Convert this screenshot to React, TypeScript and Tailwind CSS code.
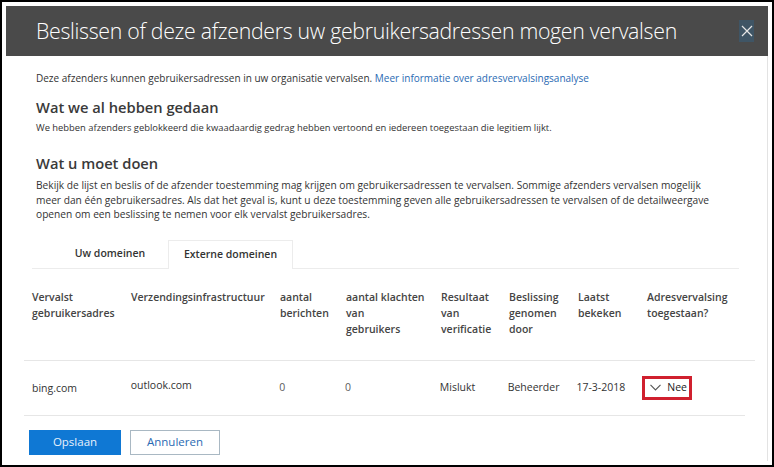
const FONT = { fontFamily: '"Segoe UI", "Open Sans", "Noto Sans", sans-serif' };

const columns = [
  { w: 'w-[99px]', lines: ['Vervalst', 'gebruikersadres'] },
  { w: 'w-[149px]', lines: ['Verzendingsinfrastructuur'] },
  { w: 'w-[66px]', lines: ['aantal', 'berichten'] },
  { w: 'w-[95px]', lines: ['aantal klachten', 'van', 'gebruikers'] },
  { w: 'w-[68px]', lines: ['Resultaat', 'van', 'verificatie'] },
  { w: 'w-[69px]', lines: ['Beslissing', 'genomen', 'door'] },
  { w: 'w-[69px]', lines: ['Laatst', 'bekeken'] },
  { w: 'w-[100px]', lines: ['Adresvervalsing', 'toegestaan?'] },
];

export default function App() {
  return (
    <div className="w-[774px] h-[467px] border-2 border-black bg-white overflow-hidden text-[#333]" style={FONT}>
      <div className="mx-[4px] mt-[4px] h-[50px] bg-[#4a4a4a] flex items-center justify-between pl-[30px] pr-[14px]">
        <h1 className="text-white text-[21.3px] font-light tracking-[-0.3px]">
          Beslissen of deze afzenders uw gebruikersadressen mogen vervalsen
        </h1>
        <div className="w-[15px] h-[22px] bg-[#3f5565] flex items-center justify-center text-[#e6e6e6]">
          <svg width="12" height="12" viewBox="0 0 12 12" fill="none" stroke="currentColor" strokeWidth="1.2">
            <path d="M1 1 L11 11 M11 1 L1 11" />
          </svg>
        </div>
      </div>

      <div className="border-r border-[#e3e3e3] mr-[4px] h-[405px] flex flex-col">
        <div className="pl-[34px] pr-[20px] pt-[15px]">
          <p className="text-[10px] leading-[14px]">
            Deze afzenders kunnen gebruikersadressen in uw organisatie vervalsen.{' '}
            <a className="text-[#2a6ab3]">Meer informatie over adresvervalsingsanalyse</a>
          </p>
          <h2 className="mt-[12px] text-[14.7px] font-semibold leading-[20px] text-[#3a3a3a]">Wat we al hebben gedaan</h2>
          <p className="text-[9.4px] leading-[14px] mt-[4px]">
            We hebben afzenders geblokkeerd die kwaadaardig gedrag hebben vertoond en iedereen toegestaan die legitiem lijkt.
          </p>
          <h2 className="mt-[18px] text-[14.7px] font-semibold leading-[20px] text-[#3a3a3a]">Wat u moet doen</h2>
          <p className="text-[10.2px] leading-[14.5px] mt-[5px] w-[680px]">
            Bekijk de lijst en beslis of de afzender toestemming mag krijgen om gebruikersadressen te vervalsen. Sommige afzenders vervalsen mogelijk meer dan één gebruikersadres. Als dat het geval is, kunt u deze toestemming geven alle gebruikersadressen te vervalsen of de detailweergave openen om een beslissing te nemen voor elk vervalst gebruikersadres.
          </p>
        </div>

        <div className="ml-[30px] mr-[28px] mt-[18px] flex border-b border-[#ececec] h-[29px]">
          <div className="w-[136px] flex items-center justify-center pl-[20px] text-[10.5px] font-semibold">Uw domeinen</div>
          <div className="w-[125px] flex items-center justify-center text-[10.5px] font-semibold border border-b-0 border-[#ececec] bg-white -mb-px">
            Externe domeinen
          </div>
        </div>

        <div className="ml-[22px] mr-[22px] mt-[20px]">
          <div className="flex pl-[8px] h-[72px] border-b border-[#e6e6e6] -mr-[10px]">
            {columns.map((c) => (
              <div key={c.lines.join(' ')} className={`${c.w} flex flex-col text-[10.5px] leading-[16px] font-semibold text-[#444]`}>
                {c.lines.map((l) => (
                  <span key={l}>{l}</span>
                ))}
              </div>
            ))}
          </div>
          <div className="flex items-center pl-[8px] h-[55px] border-b border-[#e6e6e6] text-[10.5px]">
            <div className="w-[99px] pt-[2px]">bing.com</div>
            <div className="w-[149px] -mt-[3px]">outlook.com</div>
            <div className="w-[66px] text-[#5c5c5c]">0</div>
            <div className="w-[95px] text-[#5c5c5c]">0</div>
            <div className="w-[68px]">Mislukt</div>
            <div className="w-[69px]">Beheerder</div>
            <div className="w-[69px]">17-3-2018</div>
            <div className="w-[100px]">
              <div className="w-[50px] h-[24px] border-[3px] border-[#d0202e] flex items-center gap-[6px] pl-[5px] -ml-[3px]">
                <svg width="11" height="7" viewBox="0 0 11 7" fill="none" stroke="#555" strokeWidth="1.1">
                  <path d="M0.5 0.8 L5.5 6 L10.5 0.8" />
                </svg>
                <span className="text-[10.5px] text-[#222]">Nee</span>
              </div>
            </div>
          </div>
        </div>

        <div className="flex gap-[9px] ml-[27px] mt-[14px]">
          <button className="w-[92px] h-[25px] bg-[#0f78d4] text-[#e8f1fb] text-[11.5px]">Opslaan</button>
          <button className="w-[90px] h-[25px] border border-[#a9b8c3] text-[#2a6ab3] text-[11.5px]">Annuleren</button>
        </div>
      </div>
    </div>
  );
}
